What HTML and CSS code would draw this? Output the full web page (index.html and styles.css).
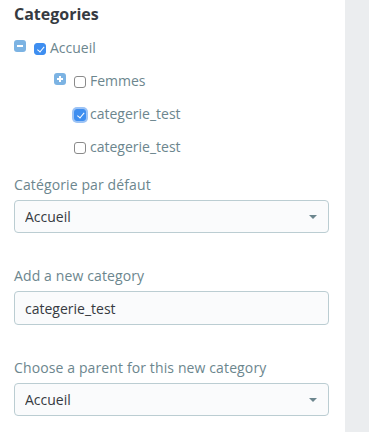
FILE: index.html
```html
<!DOCTYPE html>
<html lang="fr">
<head>
  <meta charset="UTF-8">
  <meta name="viewport" content="width=device-width, initial-scale=1.0">
  <title>Categories</title>
  <link rel="stylesheet" href="styles.css">
</head>
<body>
  <div class="panel">
    <h2 class="panel-title">Categories</h2>

    <ul class="tree">
      <li class="tree-row level-1">
        <span class="toggle toggle-minus"></span>
        <label class="tree-label"><input type="checkbox" class="check" checked> Accueil</label>
      </li>
      <li class="tree-row level-2">
        <span class="toggle toggle-plus"></span>
        <label class="tree-label"><input type="checkbox" class="check"> Femmes</label>
      </li>
      <li class="tree-row level-3">
        <label class="tree-label"><input type="checkbox" class="check focused" checked> categerie_test</label>
      </li>
      <li class="tree-row level-3">
        <label class="tree-label"><input type="checkbox" class="check"> categerie_test</label>
      </li>
    </ul>

    <div class="form-group">
      <label class="form-label" for="defaultCategory">Catégorie par défaut</label>
      <div class="select-wrap">
        <select id="defaultCategory" class="form-control">
          <option>Accueil</option>
        </select>
      </div>
    </div>

    <div class="form-group">
      <label class="form-label" for="newCategory">Add a new category</label>
      <input type="text" id="newCategory" class="form-control" value="categerie_test">
    </div>

    <div class="form-group">
      <label class="form-label" for="parentCategory">Choose a parent for this new category</label>
      <div class="select-wrap">
        <select id="parentCategory" class="form-control">
          <option>Accueil</option>
        </select>
      </div>
    </div>
  </div>

  <div class="sidebar"></div>
</body>
</html>
```

FILE: styles.css
```css
html, body {
  height: 100%;
}
body {
  margin: 0;
  display: flex;
  font-family: "Open Sans", "Noto Sans", sans-serif;
  font-size: 14px;
  color: #363a41;
  background: #fff;
}
.panel {
  width: 345px;
  box-sizing: border-box;
  padding: 0 16px 0 14px;
}
.sidebar {
  flex: 1;
  background: #ebedef;
}
.panel-title {
  margin: 3px 0 0;
  font-size: 16px;
  line-height: 22px;
  font-weight: 700;
  color: #363a41;
}

/* category tree */
.tree {
  list-style: none;
  margin: 6px 0 0;
  padding: 0;
}
.tree-row {
  display: flex;
  align-items: center;
  height: 33px;
}
.level-2 {
  padding-left: 40px;
}
.level-3 {
  padding-left: 60px;
}
.toggle {
  position: relative;
  width: 12px;
  height: 12px;
  border-radius: 3px;
  background: #7cb3e3;
  margin-right: 8px;
  margin-top: -4px;
}
.toggle::before,
.toggle::after {
  content: "";
  position: absolute;
  background: #fff;
}
.toggle::before {
  left: 3px;
  top: 5px;
  width: 6px;
  height: 2px;
}
.toggle-plus::after {
  left: 5px;
  top: 3px;
  width: 2px;
  height: 6px;
}
.tree-label {
  display: flex;
  align-items: center;
  color: #6c868e;
  line-height: 20px;
}
.check {
  appearance: none;
  -webkit-appearance: none;
  position: relative;
  width: 12px;
  height: 12px;
  margin: 2px 4px 0 0;
  border: 1px solid #8a8a8a;
  border-radius: 3px;
  background: #fff;
  box-sizing: border-box;
}
.check:checked {
  background: #3e8ef0;
  border-color: #3e8ef0;
}
.check:checked::after {
  content: "";
  position: absolute;
  left: 3.5px;
  top: 1px;
  width: 2.5px;
  height: 5.5px;
  border: solid #fff;
  border-width: 0 1.5px 1.5px 0;
  transform: rotate(40deg);
}
.check.focused {
  box-shadow: 0 0 0 2px #9cc3f5;
}

/* form fields */
.form-group {
  margin-top: 11px;
}
.form-group + .form-group {
  margin-top: 32px;
}
.form-label {
  display: block;
  color: #6c868e;
  line-height: 21px;
  letter-spacing: 0.12px;
  margin-bottom: 5px;
}
.form-control {
  display: block;
  width: 100%;
  height: 34px;
  box-sizing: border-box;
  padding: 0 10px;
  border: 1px solid #bbcdd2;
  border-radius: 4px;
  background: #fafbfc;
  font-family: inherit;
  font-size: 14px;
  color: #363a41;
  outline: none;
}
select.form-control {
  appearance: none;
  -webkit-appearance: none;
  height: 33px;
}
.select-wrap {
  position: relative;
}
.select-wrap::after {
  content: "";
  position: absolute;
  right: 12px;
  top: 15px;
  border-left: 4px solid transparent;
  border-right: 4px solid transparent;
  border-top: 4px solid #6c868e;
  pointer-events: none;
}
```
